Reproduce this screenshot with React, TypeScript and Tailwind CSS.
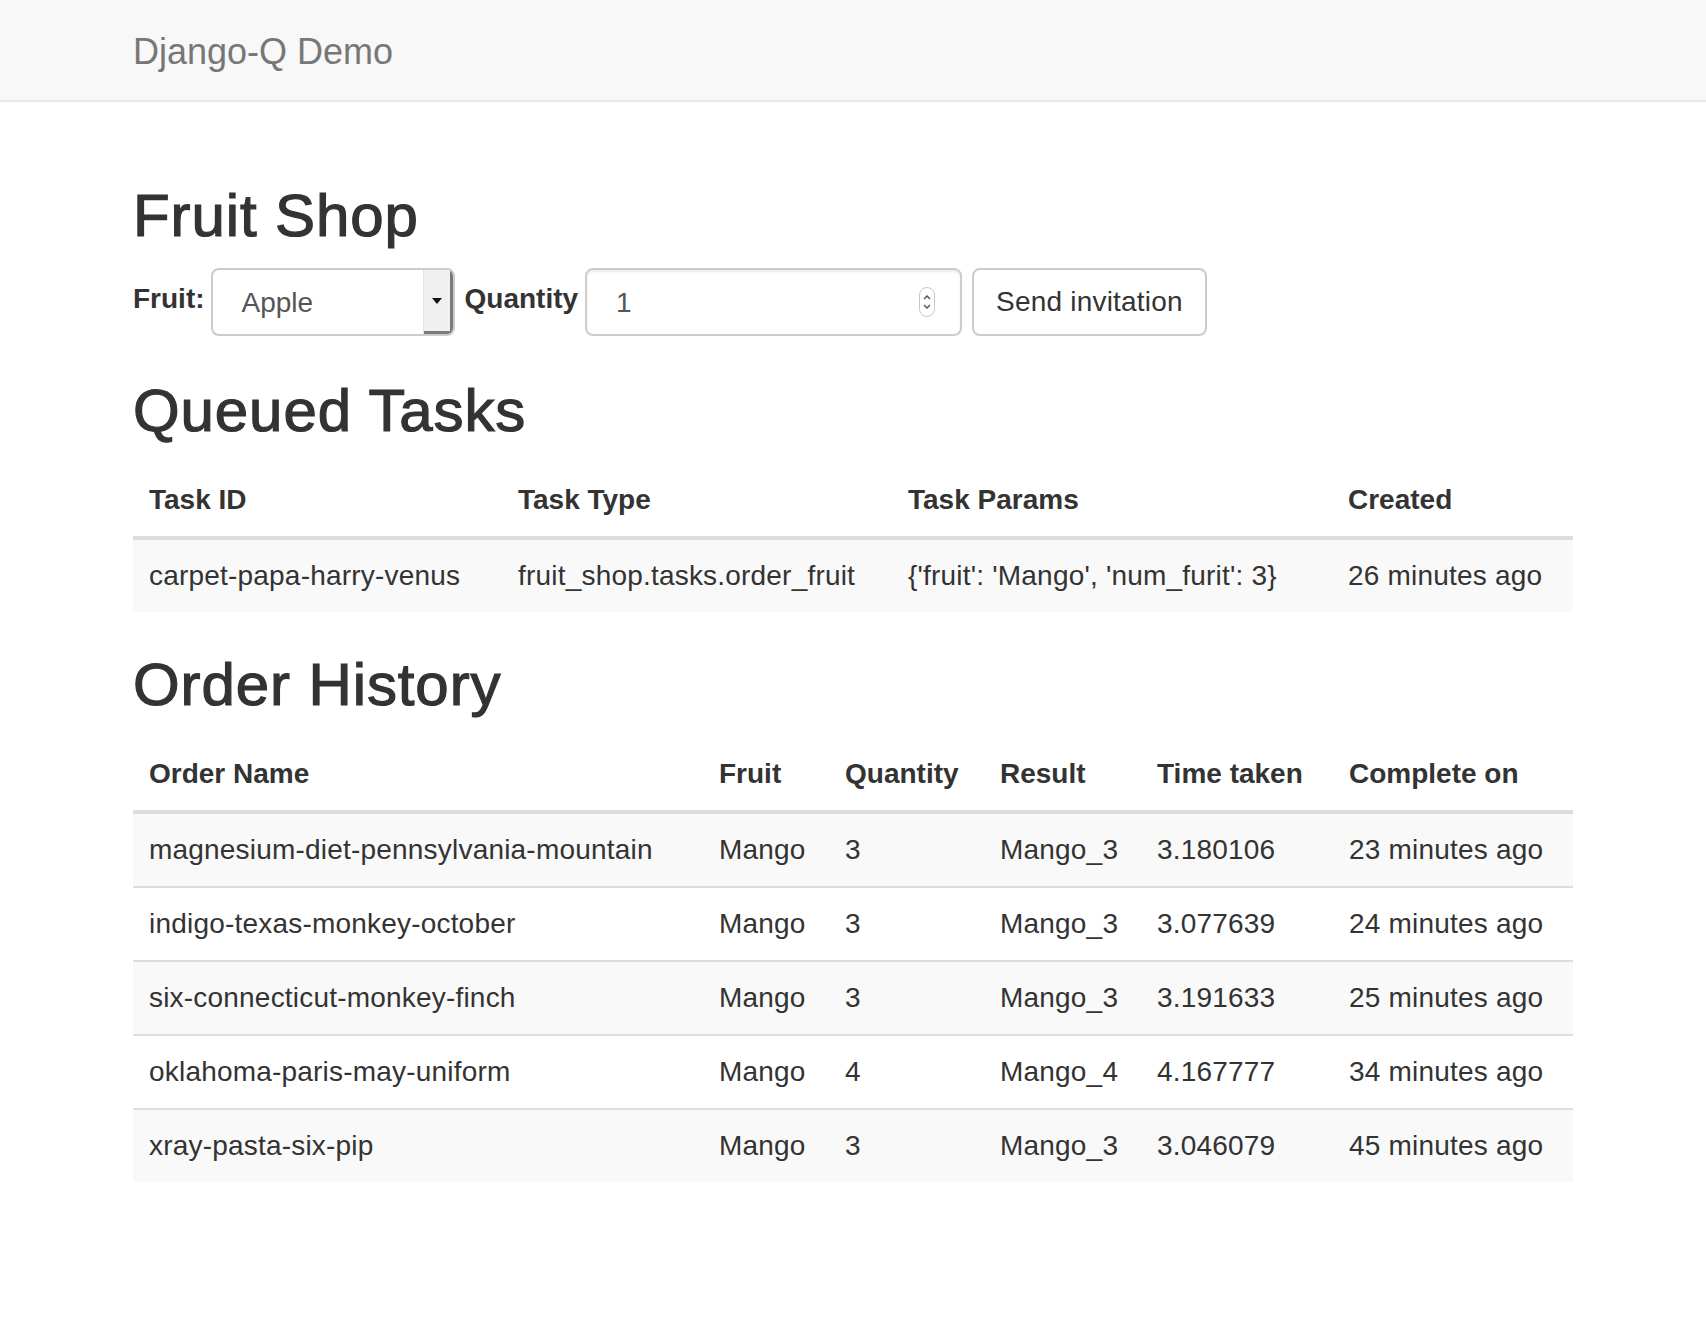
import React from "react";

const queued = [
    {
        id: "carpet-papa-harry-venus",
        type: "fruit_shop.tasks.order_fruit",
        params: "{'fruit': 'Mango', 'num_furit': 3}",
        created: "26 minutes ago",
    },
];

const orders = [
    { name: "magnesium-diet-pennsylvania-mountain", fruit: "Mango", qty: "3", result: "Mango_3", time: "3.180106", done: "23 minutes ago" },
    { name: "indigo-texas-monkey-october", fruit: "Mango", qty: "3", result: "Mango_3", time: "3.077639", done: "24 minutes ago" },
    { name: "six-connecticut-monkey-finch", fruit: "Mango", qty: "3", result: "Mango_3", time: "3.191633", done: "25 minutes ago" },
    { name: "oklahoma-paris-may-uniform", fruit: "Mango", qty: "4", result: "Mango_4", time: "4.167777", done: "34 minutes ago" },
    { name: "xray-pasta-six-pip", fruit: "Mango", qty: "3", result: "Mango_3", time: "3.046079", done: "45 minutes ago" },
];

const th = "text-left font-bold px-4 py-4 leading-[40px] border-b-4 border-[#ddd] align-bottom";
const td = "px-4 py-4 leading-[40px] border-t-2 border-[#ddd] align-top tracking-[0.2px]";
const h2 = "text-[60px] leading-[1.1] font-normal tracking-[0.9px] [-webkit-text-stroke:1.2px_#333]";

export default function App() {
    return (
        <div className="min-h-screen bg-white text-[#333] text-[28px] leading-[40px] font-['Liberation_Sans',Arial,sans-serif]">
            {/* Navbar */}
            <nav className="h-[102px] bg-[#f8f8f8] border-b-2 border-[#e7e7e7]">
                <div className="w-[1440px] mx-auto">
                    <span className="block pt-[32px] pb-[28px] text-[36px] leading-[40px] text-[#777]">Django-Q Demo</span>
                </div>
            </nav>

            <div className="w-[1440px] mx-auto pb-20">
                <h2 className={`mt-[81px] mb-[19px] ${h2}`}>Fruit Shop</h2>

                {/* Order form */}
                <form className="flex items-center h-[68px]">
                    <label className="font-bold mr-[6px] -mt-[6px]">Fruit:</label>
                    <div className="flex w-[244px] h-[68px] rounded-[8px] border-2 border-[#ccc] bg-white overflow-hidden">
                        <span className="flex-1 pl-[29px] flex items-center text-[#555] pt-[2px]">Apple</span>
                        <span className="w-[30px] flex items-center justify-center bg-[#f0f0f0] border-l border-[#e2e2e2] shadow-[inset_-3px_-3px_0_#7a7a7a]">
                            <svg width="12" height="8" viewBox="0 0 12 8" className="-ml-[3px] -mt-[2px]">
                                <path d="M1 1h10L6 7z" fill="#111" />
                            </svg>
                        </span>
                    </div>
                    <label className="font-bold ml-[10px] mr-[7px] -mt-[6px]">Quantity</label>
                    <div className="flex items-center w-[377px] h-[68px] rounded-[8px] border-2 border-[#ccc] bg-white shadow-[inset_0_2px_2px_rgba(0,0,0,0.075)]">
                        <span className="flex-1 pl-[29px] text-[#555] pt-[2px]">1</span>
                        <span className="mr-[25px] flex w-[16px] h-[30px] rounded-full border border-[#c8c8c8] items-center justify-center">
                            <svg width="10" height="22" viewBox="0 0 10 22">
                                <path d="M2 8l3-3 3 3M2 14l3 3 3-3" stroke="#555" strokeWidth="1.5" fill="none" />
                            </svg>
                        </span>
                    </div>
                    <button type="button" className="ml-[10px] h-[68px] px-[22px] rounded-[8px] border-2 border-[#ccc] bg-white text-[#333] text-[28px] tracking-[0.2px]">
                        Send invitation
                    </button>
                </form>

                <h2 className={`mt-[42px] mb-5 ${h2}`}>Queued Tasks</h2>
                <table className="w-full table-fixed border-collapse mb-10">
                    <colgroup>
                        <col className="w-[369px]" />
                        <col className="w-[390px]" />
                        <col className="w-[440px]" />
                        <col className="w-[241px]" />
                    </colgroup>
                    <thead>
                        <tr>
                            <th className={th}>Task ID</th>
                            <th className={th}>Task Type</th>
                            <th className={th}>Task Params</th>
                            <th className={th}>Created</th>
                        </tr>
                    </thead>
                    <tbody>
                        {queued.map((q, i) => (
                            <tr key={q.id} className={i % 2 === 0 ? "bg-[#f9f9f9]" : ""}>
                                <td className={td}>{q.id}</td>
                                <td className={td}>{q.type}</td>
                                <td className={td}>{q.params}</td>
                                <td className={td}>{q.created}</td>
                            </tr>
                        ))}
                    </tbody>
                </table>

                <h2 className={`mb-5 ${h2}`}>Order History</h2>
                <table className="w-full table-fixed border-collapse mb-10">
                    <colgroup>
                        <col className="w-[570px]" />
                        <col className="w-[126px]" />
                        <col className="w-[155px]" />
                        <col className="w-[157px]" />
                        <col className="w-[192px]" />
                        <col className="w-[240px]" />
                    </colgroup>
                    <thead>
                        <tr>
                            <th className={th}>Order Name</th>
                            <th className={th}>Fruit</th>
                            <th className={th}>Quantity</th>
                            <th className={th}>Result</th>
                            <th className={th}>Time taken</th>
                            <th className={th}>Complete on</th>
                        </tr>
                    </thead>
                    <tbody>
                        {orders.map((o, i) => (
                            <tr key={o.name} className={i % 2 === 0 ? "bg-[#f9f9f9]" : ""}>
                                <td className={td}>{o.name}</td>
                                <td className={td}>{o.fruit}</td>
                                <td className={td}>{o.qty}</td>
                                <td className={td}>{o.result}</td>
                                <td className={td}>{o.time}</td>
                                <td className={td}>{o.done}</td>
                            </tr>
                        ))}
                    </tbody>
                </table>
            </div>
        </div>
    );
}
